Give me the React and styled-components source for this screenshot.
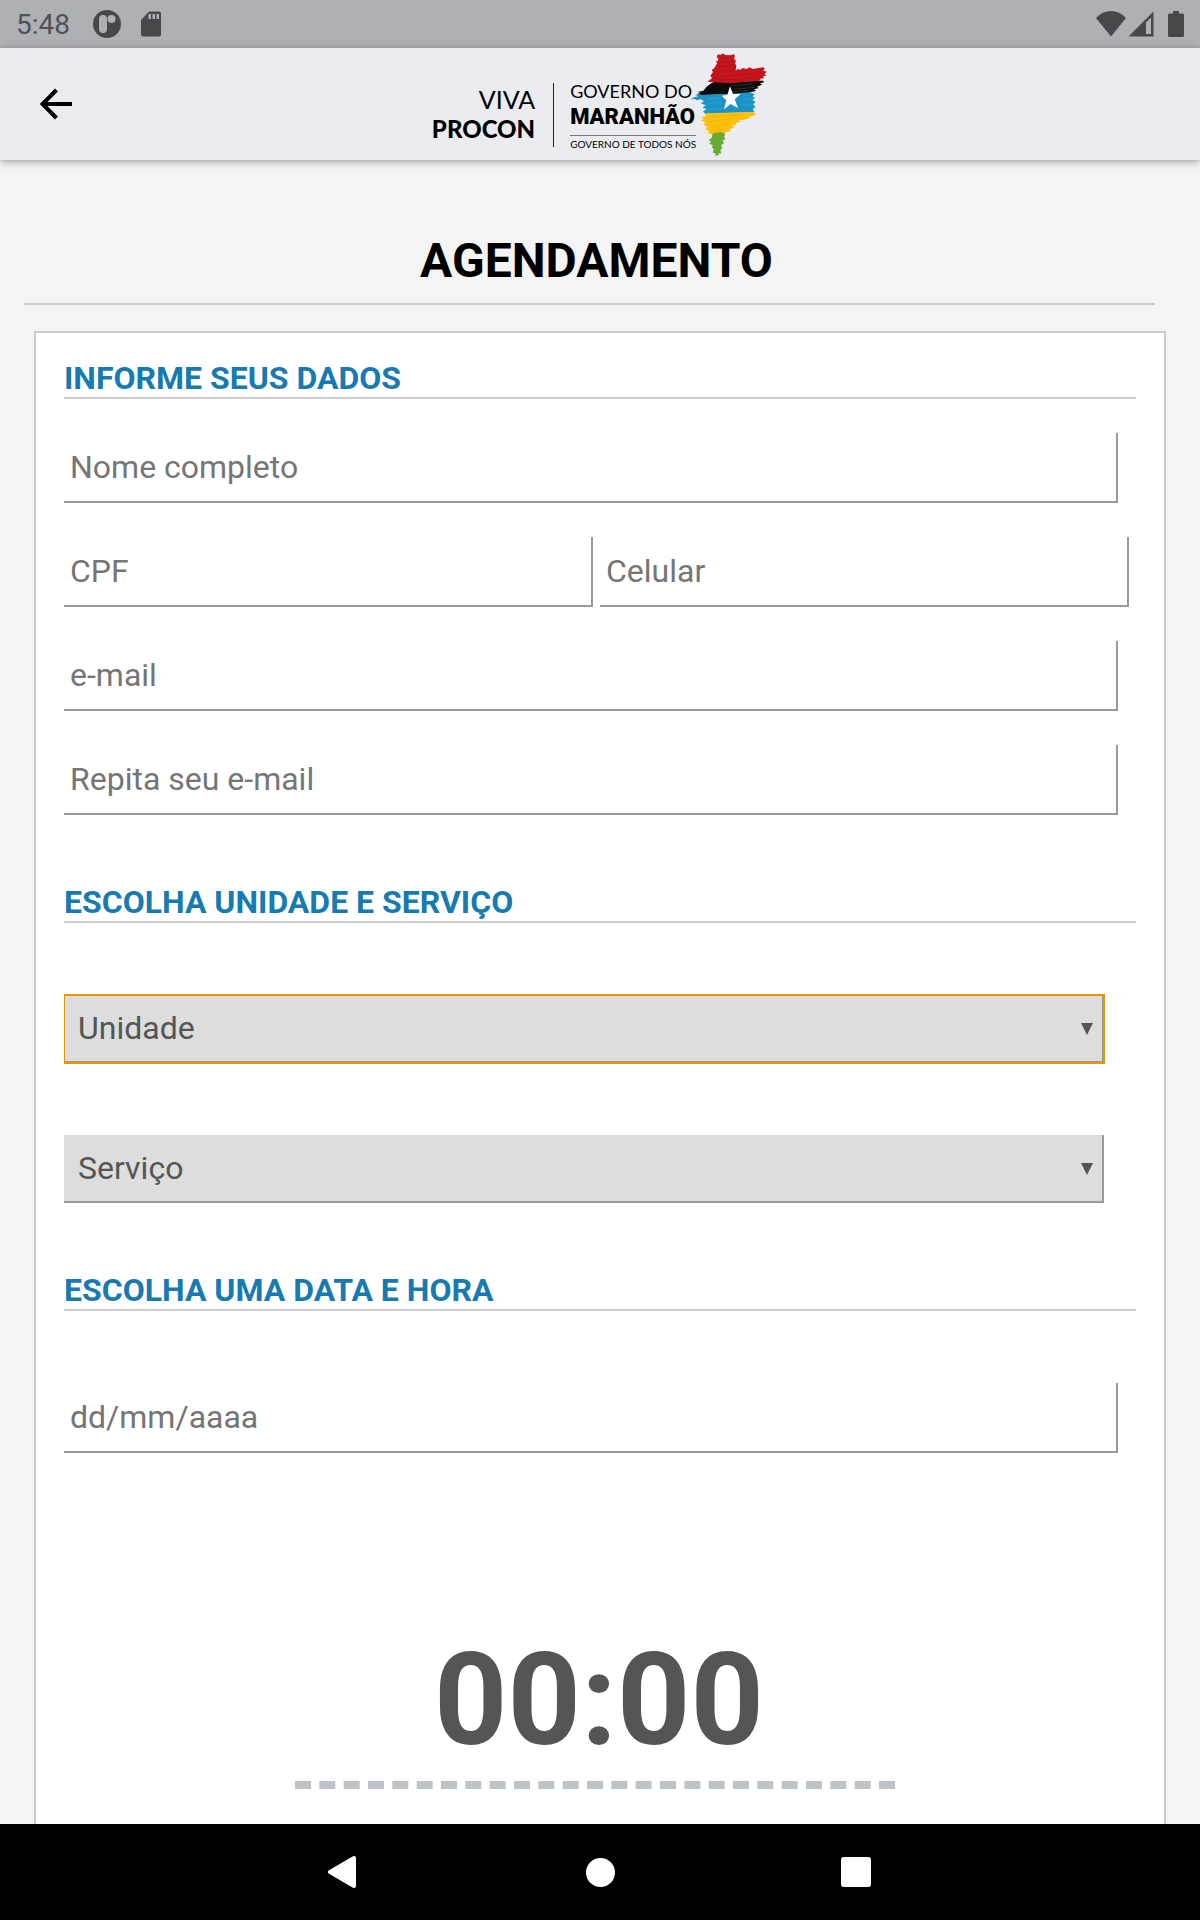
import { useState } from "react";
import styled, { createGlobalStyle } from "styled-components";

function App() {
    const [unidade, setUnidade] = useState("");
    const [servico, setServico] = useState("");
    const [hora, setHora] = useState("00:00");

    return (
        <Page>
            <GlobalStyle />
            <StatusBar>
                <StatusGroup>
                    <Time>5:48</Time>
                    <AppIcon />
                    <SdIcon />
                </StatusGroup>
                <StatusGroup $right>
                    <WifiIcon />
                    <SignalIcon />
                    <BatteryIcon />
                </StatusGroup>
            </StatusBar>

            <Header>
                <BackButton type="button" aria-label="Voltar">
                    <svg width="32" height="32" viewBox="0 0 32 32" fill="none" stroke="#000" strokeWidth="4">
                        <path d="M32 16H4" />
                        <path d="M16.500 2L2.500 16L16.500 30" />
                    </svg>
                </BackButton>
                <Logo>
                    <Procon>
                        <Viva>VIVA</Viva>
                        <ProconName>PROCON</ProconName>
                    </Procon>
                    <Governo>
                        <GovernoTop>GOVERNO DO</GovernoTop>
                        <GovernoName>MARANHÃO</GovernoName>
                        <Slogan>GOVERNO DE TODOS NÓS</Slogan>
                    </Governo>
                    <StateMap />
                </Logo>
            </Header>

            <Main>
                <Title>AGENDAMENTO</Title>
                <Form>
                    <SectionTitle>INFORME SEUS DADOS</SectionTitle>
                    <Fields>
                        <Input aria-label="Nome completo" placeholder="Nome completo" />
                        <Pair>
                            <PairInput aria-label="CPF" placeholder="CPF" />
                            <PairInput type="tel" aria-label="Celular" placeholder="Celular" />
                        </Pair>
                        <Input type="email" aria-label="e-mail" placeholder="e-mail" />
                        <Input type="email" aria-label="Repita seu e-mail" placeholder="Repita seu e-mail" />
                    </Fields>

                    <SectionTitle>ESCOLHA UNIDADE E SERVIÇO</SectionTitle>
                    <Fields $wide>
                        <SelectBox>
                            <Select aria-label="Unidade" $active value={unidade} onChange={(e) => setUnidade(e.target.value)}>
                                <option value="">Unidade</option>
                            </Select>
                            <Arrow />
                        </SelectBox>
                        <SelectBox>
                            <Select aria-label="Serviço" value={servico} onChange={(e) => setServico(e.target.value)}>
                                <option value="">Serviço</option>
                            </Select>
                            <Arrow />
                        </SelectBox>
                    </Fields>

                    <SectionTitle>ESCOLHA UMA DATA E HORA</SectionTitle>
                    <Fields $wide>
                        <Input aria-label="Data" placeholder="dd/mm/aaaa" />
                    </Fields>
                    <ClockRow>
                        <Clock aria-label="Hora" value={hora} onChange={(e) => setHora(e.target.value)} />
                    </ClockRow>
                </Form>
            </Main>

            <NavBar>
                <NavButton type="button" aria-label="Voltar">
                    <svg width="32" height="36" viewBox="0 0 32 36">
                        <path d="M26 4V32L2 18Z" fill="#fff" stroke="#fff" strokeWidth="4" strokeLinejoin="round" />
                    </svg>
                </NavButton>
                <NavButton type="button" aria-label="Início">
                    <Circle />
                </NavButton>
                <NavButton type="button" aria-label="Recentes">
                    <Square />
                </NavButton>
            </NavBar>
        </Page>
    );
}

function AppIcon() {
    return (
        <svg width="28" height="28" viewBox="0 0 28 28">
            <circle cx="14" cy="14" r="14" fill="#47484a" />
            <rect x="6" y="5" width="8" height="18" rx="4" fill="#afb0b5" />
            <circle cx="18.500" cy="9" r="4" fill="#afb0b5" />
        </svg>
    );
}

function SdIcon() {
    return (
        <svg width="20" height="26" viewBox="0 0 20 26">
            <path d="M8 .5H18Q20 .5 20 2.500V23.500Q20 25.500 18 25.500H2Q0 25.500 0 23.500V9Z" fill="#47484a" />
            <path d="M7.500 3H10V8H7.500ZM11.500 3H14V8H11.500ZM15.500 3H18V8H15.500Z" fill="#afb0b5" />
        </svg>
    );
}

function WifiIcon() {
    return (
        <svg width="30" height="26" viewBox="0 0 30 26">
            <path d="M0 7Q6.500 0 15 0T30 7L15 25.500Z" fill="#47484a" />
        </svg>
    );
}

function SignalIcon() {
    return (
        <svg width="26" height="26" viewBox="0 0 26 26">
            <path d="M25.500 .5V25.500H.5ZM23 6.500L18 11.500V23H23Z" fill="#47484a" fillRule="evenodd" />
        </svg>
    );
}

function BatteryIcon() {
    return (
        <svg width="16" height="26" viewBox="0 0 16 26">
            <path d="M5 0H11V2.500H14.500Q16 2.500 16 4V24.500Q16 26 14.500 26H1.500Q0 26 0 24.500V4Q0 2.500 1.500 2.500H5Z" fill="#47484a" />
        </svg>
    );
}

function Arrow() {
    return (
        <ArrowSvg width="12" height="12" viewBox="0 0 12 12" aria-hidden="true">
            <path d="M0 0H12L6 12Z" fill="#555" />
        </ArrowSvg>
    );
}

// brush-painted map of the state, one band per colour
function StateMap() {
    return (
        <Map width="78" height="104" viewBox="26 20 234 312" aria-hidden="true">
            <path d="M92 112L104 108L246 106L248 111L236 114L243 118L226 124L233 128L218 132L224 137L206 141L208 145L62 149L46 147L58 142L48 140L66 136L76 124Z" fill="#0b0b0b" />
            <path d="M150 122L212 116M158 131L222 126M150 139L200 135" stroke="#3c3c3e" strokeWidth="2" />
            <path d="M106 33L111 27L118 29L124 24L132 29L146 30L157 27L161 31L158 40L164 46L161 55L165 60L163 76L170 70L176 74L184 68L196 71L205 66L214 71L232 68L247 66L250 72L245 76L257 79L250 85L255 91L246 92L248 98L236 101L239 105L225 108L200 109L150 114L78 109L92 99L87 91L95 80L91 75L99 68L104 59L108 54L103 49L112 44Z" fill="#c3161c" />
            <path d="M116 38L152 34M112 52L156 50M108 66L156 60M100 80L154 72M100 96L230 84M120 104L222 97" stroke="#b51218" strokeWidth="3" fill="none" />
            <path d="M40 147L62 149L140 146L206 141L220 147L214 153L221 158L213 164L223 170L215 177L223 185L214 191L219 200L140 203L72 206L65 198L76 192L64 187L73 180L58 174L68 168L58 162L46 165L41 161L28 162L38 156L50 153Z" fill="#1d94c8" />
            <path d="M76 160L116 158M82 174L122 172M80 192L124 188M184 162L208 160M180 180L212 178" stroke="#2d9ecf" strokeWidth="3" />
            <path d="M72 204L216 200L224 206L216 212L200 215L208 218L184 224L172 224L178 229L162 233L166 237L154 241L158 247L144 252L150 257L132 261L128 266L100 269L78 263L84 257L72 251L77 244L66 237L73 232L59 225L68 221L61 216L74 213Z" fill="#fcc00d" />
            <path d="M86 214L180 209M80 228L152 220M90 244L144 236M98 258L128 252" stroke="#f2b40c" strokeWidth="3" />
            <path d="M94 264L120 261L132 266L128 274L133 280L124 286L128 294L119 300L123 308L117 314L120 325L110 324L114 329L101 331L103 325L94 321L98 312L91 305L95 299L83 295L90 289L82 284L91 278Z" fill="#68ab32" />
            <path d="M146 123L155 146L178 146L160 162L170 188L148 176L128 192L135 165L121 151L138 149Z" fill="#fff" />
        </Map>
    );
}

const GlobalStyle = createGlobalStyle`
* {
    box-sizing: border-box;
}
body {
    margin: 0;
    background: #f4f4f4;
    font-family: Roboto, "Liberation Sans", sans-serif;
}
button, input, select {
    font-family: inherit;
}
`;

const Page = styled.div`
display: flex;
flex-direction: column;
min-height: 100vh;
`;

const StatusBar = styled.div`
display: flex;
justify-content: space-between;
height: 48px;
padding: 0 16px;
background: #afb0b5;
color: #505154;
`;

const StatusGroup = styled.div`
display: flex;
align-items: center;
gap: ${(props) => props.$right ? "2px" : "20px"};
svg:last-child {
    margin-left: ${(props) => props.$right && "12px"};
}
`;

const Time = styled.span`
font-size: 28px;
line-height: 32px;
padding: 2px 3px 0 0;
`;

const Header = styled.header`
display: grid;
grid-template-columns: 1fr auto 1fr;
align-items: center;
min-height: 112px;
background: #ebecf0;
box-shadow: 0 2px 8px rgba(0, 0, 0, 0.35);
`;

const BackButton = styled.button`
display: flex;
justify-self: start;
margin-left: 32px;
padding: 8px;
border: none;
background: none;
cursor: pointer;
`;

const Logo = styled.div`
display: flex;
align-items: center;
color: #000;
font-family: Lato, "Liberation Sans", sans-serif;
white-space: nowrap;
`;

const Procon = styled.div`
display: flex;
flex-direction: column;
align-items: flex-end;
margin-top: 20px;
padding-right: 18px;
line-height: 30px;
`;

const Viva = styled.span`
font-size: 25px;
`;

const ProconName = styled.span`
font-size: 24px;
font-weight: 900;
`;

const Governo = styled.div`
display: flex;
flex-direction: column;
height: 64px;
margin-top: 22px;
padding-left: 16px;
border-left: 1px solid #222;
`;

const GovernoTop = styled.span`
font-size: 18px;
line-height: 16px;
`;

const GovernoName = styled.span`
font-family: Roboto, "Liberation Sans", sans-serif;
font-size: 22px;
font-weight: 900;
line-height: 36px;
border-bottom: 1px solid #777;
`;

const Slogan = styled.span`
font-size: 10px;
line-height: 16px;
`;

const Map = styled.svg`
margin-left: -6px;
`;

const Main = styled.main`
display: flex;
flex-direction: column;
flex: 1;
padding-top: 73px;
`;

const Title = styled.h1`
margin: 0 45px 26px 24px;
padding: 0 0 14px 14px;
border-bottom: 2px solid #ccc;
color: #000;
font-size: 48px;
line-height: 56px;
text-align: center;
`;

const Form = styled.form`
flex: 1;
margin: 0 34px;
padding: 26px 28px;
border: 2px solid #ccc;
border-bottom: none;
background: #fff;
`;

const SectionTitle = styled.h2`
margin: 0;
border-bottom: 2px solid #ccc;
color: #177ab0;
font-size: 32px;
line-height: 38px;
`;

const Fields = styled.div`
display: flex;
flex-direction: column;
gap: ${(props) => props.$wide ? "72px" : "34px"};
padding: ${(props) => props.$wide ? "72px 0 68px" : "34px 0 68px"};
`;

const Input = styled.input`
width: calc(100% - 18px);
height: 70px;
padding: 0 6px;
border: solid #999;
border-width: 0 2px 2px 0;
border-radius: 0;
background: #fff;
color: #555;
font-size: 32px;
&::placeholder {
    color: #757575;
}
`;

const Pair = styled.div`
display: grid;
grid-template-columns: 1fr 1fr;
gap: 7px;
padding-right: 7px;
`;

const PairInput = styled(Input)`
width: 100%;
`;

const SelectBox = styled.div`
position: relative;
width: calc(100% - 32px);
clip-path: inset(-1px -1px -1px 0);
`;

const Select = styled.select`
display: block;
appearance: none;
width: 100%;
height: 68px;
padding: 0 36px 0 14px;
border: solid #999;
border-width: 0 2px 2px 0;
border-radius: 0;
outline: ${(props) => props.$active ? "2px solid #e59700" : "none"};
outline-offset: -1px;
background: #ddd;
color: #555;
font-size: 32px;
`;

const ArrowSvg = styled.svg`
position: absolute;
top: 28px;
right: 11px;
pointer-events: none;
`;

const ClockRow = styled.div`
display: flex;
justify-content: center;
padding: 104px 10px 0 0;
`;

const Clock = styled.input`
width: 600px;
max-width: 100%;
height: 164px;
padding: 0 0 6px 8px;
border: none;
border-bottom: 8px dashed #bdc3c7;
background: none;
color: #555;
font-size: 128px;
font-weight: 700;
line-height: 150px;
text-align: center;
`;

const NavBar = styled.nav`
display: flex;
justify-content: center;
gap: 192px;
height: 96px;
background: #000;
`;

const NavButton = styled.button`
display: flex;
align-items: center;
justify-content: center;
width: 64px;
padding: 0;
border: none;
background: none;
cursor: pointer;
`;

const Circle = styled.span`
width: 29px;
height: 29px;
border-radius: 50%;
background: #fff;
`;

const Square = styled.span`
width: 30px;
height: 30px;
border-radius: 3px;
background: #fff;
`;

export default App;
